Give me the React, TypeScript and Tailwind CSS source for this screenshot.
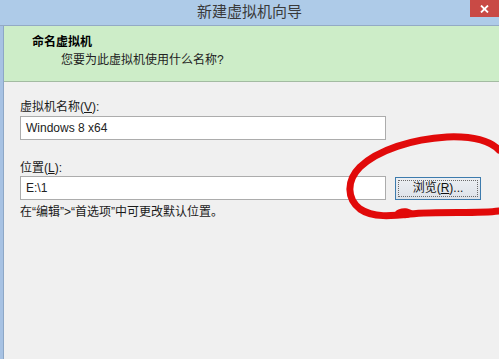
import React from "react";

const font = "font-['Liberation_Sans','Noto_Sans_CJK_SC',sans-serif]";

function Circle() {
  return (
    <svg className="absolute inset-0 pointer-events-none" width="499" height="359" viewBox="0 0 499 359">
      <path
        d="M 499 150 C 490 141, 472 136, 447 137 C 412 139, 378 150, 360 167 C 346 181, 347 199, 360 209 C 373 218, 392 216, 410 214 C 440 211, 478 214, 499 211"
        fill="none"
        stroke="#e10a0a"
        strokeWidth="7"
        strokeLinecap="round"
      />
      <path d="M 395 212 C 399 207, 411 207, 414 213 C 411 220, 399 220, 395 212 Z" fill="#e10a0a" />
    </svg>
  );
}

export default function App() {
  return (
    <div className={`relative w-[499px] h-[359px] overflow-hidden bg-[#f0f0f0] flex flex-col ${font}`}>
      {/* Title bar */}
      <div className="relative h-[26px] shrink-0 bg-[#aecbe8] border-b border-[#93aac4] flex items-center justify-center">
        <span className="text-[15px] leading-[18px] text-[#3a3a3a] pb-[1px]">新建虚拟机向导</span>
        <div className="absolute top-0 right-0 w-[29px] h-[17px] bg-[#c94a45] flex items-center justify-center">
          <svg width="9" height="8" viewBox="0 0 9 8">
            <path d="M1 0.5 L8 7.5 M8 0.5 L1 7.5" stroke="#fff" strokeWidth="1.8" />
          </svg>
        </div>
      </div>

      <div className="flex flex-1">
        {/* Window frame */}
        <div className="w-[4px] bg-[#a7c2e3] border-r border-[#8da7c6]" />

        <div className="flex-1 flex flex-col">
          {/* Header */}
          <div className="h-[56px] bg-[#cdedc8] border-b border-[#a3bba2] pt-[8px]">
            <div className="pl-[28px] text-[12px] leading-[16px] font-bold text-black">命名虚拟机</div>
            <div className="pl-[57px] mt-[2px] text-[12px] leading-[16px] text-[#222]">您要为此虚拟机使用什么名称?</div>
          </div>

          {/* Body */}
          <div className="pl-[16px] pt-[17px] text-[12px] leading-[16px] text-[#1a1a1a]">
            <div>
              虚拟机名称(<span className="underline">V</span>):
            </div>
            <div className="mt-[1px] w-[366px] h-[24px] bg-white border border-[#acacac] flex items-center px-[5px] text-[12px] text-[#222]">
              Windows 8 x64
            </div>

            <div className="mt-[20px]">
              位置(<span className="underline">L</span>):
            </div>
            <div className="flex items-center gap-[9px]">
              <div className="w-[366px] h-[24px] bg-white border border-[#acacac] flex items-center px-[5px] text-[#222]">
                E:\1
              </div>
              <div className="w-[86px] h-[23px] border border-[#3d7bad] bg-gradient-to-b from-[#eceff3] to-[#dde2e8] p-[2px]">
                <div className="w-full h-full border border-dotted border-[#6a6a6a] flex items-center justify-center text-[12px] leading-[14px] text-[#111]">
                  浏览(<span className="underline">R</span>)...
                </div>
              </div>
            </div>

            <div className="mt-[4px]">在“编辑”&gt;“首选项”中可更改默认位置。</div>
          </div>
        </div>
      </div>

      <Circle />
    </div>
  );
}
